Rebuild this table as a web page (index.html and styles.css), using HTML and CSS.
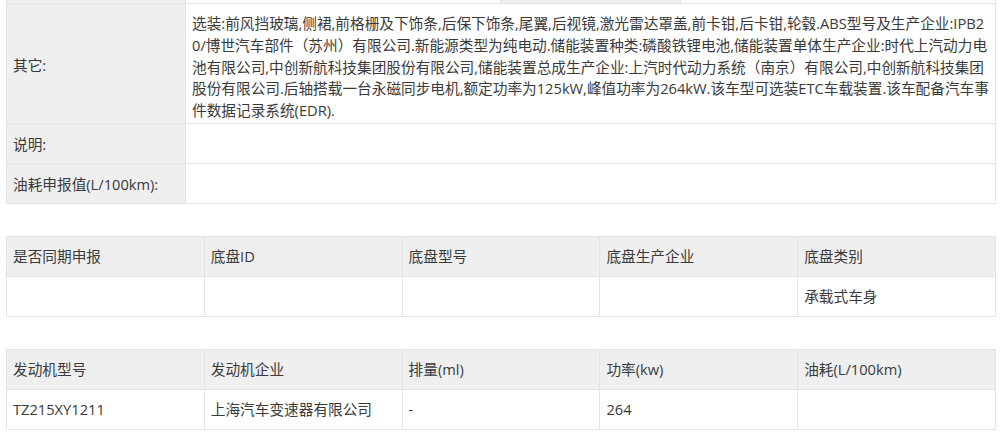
FILE: index.html
```html
<!DOCTYPE html>
<html lang="zh-CN">
<head>
<meta charset="utf-8">
<title>车型参数</title>
<link rel="stylesheet" href="styles.css">
</head>
<body>
<div class="page">
  <table class="info">
    <colgroup><col class="c-label"><col class="c-v1"><col class="c-l2"><col class="c-v2"></colgroup>
    <tr class="cut">
      <td class="label"></td><td></td><td class="label"></td><td></td>
    </tr>
    <tr class="tall">
      <td class="label">其它:</td>
      <td class="value" colspan="3">选装:前风挡玻璃,侧裙,前格栅及下饰条,后保下饰条,尾翼,后视镜,激光雷达罩盖,前卡钳,后卡钳,轮毂.ABS型号及生产企业:IPB20/博世汽车部件（苏州）有限公司.新能源类型为纯电动.储能装置种类:磷酸铁锂电池,储能装置单体生产企业:时代上汽动力电池有限公司,中创新航科技集团股份有限公司,储能装置总成生产企业:上汽时代动力系统（南京）有限公司,中创新航科技集团股份有限公司.后轴搭载一台永磁同步电机,额定功率为125kW,峰值功率为264kW.该车型可选装ETC车载装置.该车配备汽车事件数据记录系统(EDR).</td>
    </tr>
    <tr>
      <td class="label">说明:</td>
      <td class="value" colspan="3"></td>
    </tr>
    <tr>
      <td class="label">油耗申报值(L/100km):</td>
      <td class="value" colspan="3"></td>
    </tr>
  </table>

  <table class="grid">
    <tr class="head">
      <td>是否同期申报</td><td>底盘ID</td><td>底盘型号</td><td>底盘生产企业</td><td>底盘类别</td>
    </tr>
    <tr>
      <td></td><td></td><td></td><td></td><td>承载式车身</td>
    </tr>
  </table>

  <table class="grid">
    <tr class="head">
      <td>发动机型号</td><td>发动机企业</td><td>排量(ml)</td><td>功率(kw)</td><td>油耗(L/100km)</td>
    </tr>
    <tr>
      <td>TZ215XY1211</td><td>上海汽车变速器有限公司</td><td>-</td><td>264</td><td></td>
    </tr>
  </table>
</div>
</body>
</html>
```

FILE: styles.css
```css
html, body {
  margin: 0;
  padding: 0;
  background: #ffffff;
}

body {
  font-family: "Open Sans", "Noto Sans CJK SC", sans-serif;
  font-size: 14.67px;
  color: #3a3a3a;
}

.page {
  width: 990px;
  padding: 0 4px 0 6px;
}

table {
  width: 990px;
  border-collapse: collapse;
  table-layout: fixed;
}

td {
  border: 1px solid #e4e4e4;
  padding: 9px 6px 9px 6px;
  line-height: 21px;
  height: 21px;
  vertical-align: middle;
  text-align: left;
}

.info .c-label { width: 179px; }
.info .c-v1 { width: 315px; }
.info .c-l2 { width: 180px; }

.info td {
  padding-top: 10px;
  padding-bottom: 8px;
}

.info .label {
  background: #efefef;
}

.info .cut td {
  height: 3px;
  padding: 0;
  line-height: 0;
  border-top: none;
}

.info .tall td {
  padding-top: 12px;
  padding-bottom: 8px;
}

.info .tall .value {
  padding: 9px 6px 1px 6px;
  line-height: 21.75px;
  word-break: break-all;
}

.grid {
  margin-top: 32px;
}

.grid td {
  width: 20%;
}

.grid .head td {
  background: #efefef;
}
```
